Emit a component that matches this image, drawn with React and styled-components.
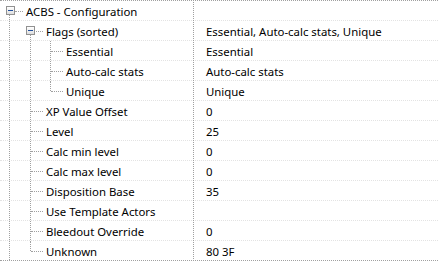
import React from "react";
import styled, { createGlobalStyle } from "styled-components";

const GlobalStyle = createGlobalStyle`
  html, body {
    margin: 0;
    padding: 0;
    background: #ffffff;
  }
  body {
    font-family: "Noto Sans", "Open Sans", sans-serif;
    font-size: 11.4px;
    color: #000000;
  }
`;

const Tree = styled.div`
  width: 438px;
  border-top: 1px dotted #a0a0a0;
  border-bottom: 1px dotted #a0a0a0;
`;

const Row = styled.div`
  display: flex;
  height: 19px;
  border-bottom: 1px dotted #e3e3e3;

  &:last-child {
    border-bottom: none;
  }
`;

const NameCell = styled.div`
  display: flex;
  align-items: stretch;
  width: 193px;
  flex-shrink: 0;
  overflow: hidden;
  white-space: nowrap;
`;

const ValueCell = styled.div`
  flex: 1;
  display: flex;
  align-items: center;
  padding-left: 12px;
  margin-top: -1px;
  margin-bottom: -1px;
  border-left: 1px dotted #a0a0a0;
  white-space: nowrap;
`;

const Label = styled.span`
  display: flex;
  align-items: center;
  padding-left: 5px;
  padding-top: 1px;
`;

const ValueText = styled.span`
  padding-top: 1px;
`;

// one indent column of the tree: a vertical guide, an arm to the label, maybe an expander
const Guide = styled.span`
  position: relative;
  flex-shrink: 0;
  width: ${(p) => (p.$first ? 21 : 20)}px;

  &::before {
    content: "";
    display: ${(p) => (p.$up || p.$down ? "block" : "none")};
    position: absolute;
    left: 9px;
    top: ${(p) => (p.$up ? 0 : 10)}px;
    bottom: ${(p) => (p.$down ? 0 : 9)}px;
    border-left: 1px dotted #a0a0a0;
  }

  &::after {
    content: "";
    display: ${(p) => (p.$arm ? "block" : "none")};
    position: absolute;
    left: ${(p) => (p.$box ? 15 : 10)}px;
    right: -2px;
    top: 10px;
    border-top: 1px dotted #a0a0a0;
  }
`;

const Expander = styled.span`
  position: absolute;
  z-index: 1;
  left: ${(p) => (p.$first ? 6 : 5)}px;
  top: 5px;
  width: 7px;
  height: 7px;
  border: 1px solid #919191;
  background: linear-gradient(#ffffff, #dedede);
  display: flex;
  align-items: center;
  justify-content: center;

  &::after {
    content: "";
    width: 5px;
    height: 1px;
    background: #1f4e9c;
  }
`;

// guide kinds: pass = sibling line, tee = line + arm, elbow = last child, open = expanded node
const guideProps = {
  pass: { $up: true, $down: true },
  tee: { $up: true, $down: true, $arm: true },
  elbow: { $up: true, $arm: true },
  open: { $down: true, $arm: true, $box: true },
};

const rows = [
  { name: "ACBS - Configuration", value: "", guides: ["open"] },
  { name: "Flags (sorted)", value: "Essential, Auto-calc stats, Unique", guides: ["pass", "open"] },
  { name: "Essential", value: "Essential", guides: ["pass", "pass", "tee"] },
  { name: "Auto-calc stats", value: "Auto-calc stats", guides: ["pass", "pass", "tee"] },
  { name: "Unique", value: "Unique", guides: ["pass", "pass", "elbow"] },
  { name: "XP Value Offset", value: "0", guides: ["pass", "tee"] },
  { name: "Level", value: "25", guides: ["pass", "tee"] },
  { name: "Calc min level", value: "0", guides: ["pass", "tee"] },
  { name: "Calc max level", value: "0", guides: ["pass", "tee"] },
  { name: "Disposition Base", value: "35", guides: ["pass", "tee"] },
  { name: "Use Template Actors", value: "", guides: ["pass", "tee"] },
  { name: "Bleedout Override", value: "0", guides: ["pass", "tee"] },
  { name: "Unknown", value: "80 3F", guides: ["pass", "elbow"] },
];

export default function App() {
  return (
    <>
      <GlobalStyle />
      <Tree>
        {rows.map((row) => (
          <Row key={row.name}>
            <NameCell>
              {row.guides.map((kind, i) => (
                <Guide key={i} $first={i === 0} {...guideProps[kind]}>
                  {kind === "open" && <Expander $first={i === 0} />}
                </Guide>
              ))}
              <Label>{row.name}</Label>
            </NameCell>
            <ValueCell>
              <ValueText>{row.value}</ValueText>
            </ValueCell>
          </Row>
        ))}
      </Tree>
    </>
  );
}
